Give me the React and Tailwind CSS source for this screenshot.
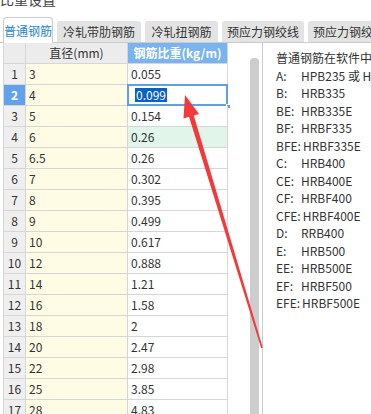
import React from "react";

const rows = [
  ["3", "0.055"],
  ["4", "0.099"],
  ["5", "0.154"],
  ["6", "0.26"],
  ["6.5", "0.26"],
  ["7", "0.302"],
  ["8", "0.395"],
  ["9", "0.499"],
  ["10", "0.617"],
  ["12", "0.888"],
  ["14", "1.21"],
  ["16", "1.58"],
  ["18", "2"],
  ["20", "2.47"],
  ["22", "2.98"],
  ["25", "3.85"],
  ["28", "4.83"],
];

const grades = [
  ["A:", "HPB235 或 HPB300"],
  ["B:", "HRB335"],
  ["BE:", "HRB335E"],
  ["BF:", "HRBF335"],
  ["BFE:", "HRBF335E"],
  ["C:", "HRB400"],
  ["CE:", "HRB400E"],
  ["CF:", "HRBF400"],
  ["CFE:", "HRBF400E"],
  ["D:", "RRB400"],
  ["E:", "HRB500"],
  ["EE:", "HRB500E"],
  ["EF:", "HRBF500"],
  ["EFE:", "HRBF500E"],
];

const tabs = [
  ["冷轧带肋钢筋", "w-[84px]"],
  ["冷轧扭钢筋", "w-[73px]"],
  ["预应力钢绞线", "w-[82px]"],
  ["预应力钢绞线", "w-[82px]"],
];

function Row({ n, d, w }) {
  const selected = n === 2;
  const green = n === 4;
  return (
    <div className="grid grid-cols-[22px_102px_100px] h-[21px]">
      <div
        className={
          selected
            ? "bg-[#62a2ec] text-white font-bold flex items-center justify-center border-r border-b border-[#d6d6d6]"
            : "bg-[#efefef] flex items-center justify-center border-r border-b border-[#d6d6d6]"
        }
      >
        {n}
      </div>
      <div className="bg-[#fffce6] flex items-center pl-[3px] border-r border-b border-[#d6d6d6]">
        {d}
      </div>
      <div
        className={
          green
            ? "bg-[#e1f5ea] flex items-center pl-[3px] border-r border-b border-[#d6d6d6]"
            : "bg-white flex items-center pl-[3px] border-r border-b border-[#d6d6d6] relative"
        }
      >
        {selected ? (
          <>
            <span className="ml-[4px] bg-[#0a60c9] text-white leading-[14px] px-px">{w}</span>
            <div className="absolute left-[-1px] top-[-1px] right-[-1px] bottom-[-1px] border-2 border-[#5f9fe6]" />
            <div className="absolute right-[-4px] bottom-[-4px] w-[5px] h-[5px] bg-[#5f9fe6] border border-white" />
          </>
        ) : (
          w
        )}
      </div>
    </div>
  );
}

export default function App() {
  return (
    <div className="relative w-[371px] h-[414px] overflow-hidden bg-white text-[12px] text-[#333] font-['Noto_Sans_CJK_SC','Noto_Sans',sans-serif]">
      <div className="h-[17px] overflow-hidden">
        <div className="-mt-[9px] text-[14px] leading-[16px] text-[#444]">比重设置</div>
      </div>

      <div className="h-[26px] flex items-end gap-[4px] pl-[3px] border-b border-[#cbcbcb] whitespace-nowrap">
        <div className="w-[60px] h-[26px] -mb-px bg-white border border-b-0 border-[#cbcbcb] rounded-t-[4px] flex items-center justify-center text-[#1f7fd8]">
          普通钢筋
        </div>
        {tabs.map(([t, w], i) => (
          <div
            key={i}
            className={`${w} shrink-0 h-[21px] bg-[#e3e3e3] rounded-t-[3px] flex items-center justify-center`}
          >
            {t}
          </div>
        ))}
      </div>

      <div className="flex h-[371px]">
        <div className="w-[262px] flex shrink-0">
          <div className="ml-[3px] w-[224px] border-l border-[#d6d6d6] leading-[16px]">
            <div className="grid grid-cols-[22px_102px_100px] h-[21px]">
              <div className="bg-[#ececec] border-r border-b border-[#d6d6d6]" />
              <div className="bg-[#ececec] border-r border-b border-[#d6d6d6] flex items-center justify-center">
                直径(mm)
              </div>
              <div className="bg-[#7ab3f2] border-r border-b border-[#d6d6d6] flex items-center justify-center text-white font-bold">
                钢筋比重(kg/m)
              </div>
            </div>
            {rows.map(([d, w], i) => (
              <Row key={i} n={i + 1} d={d} w={w} />
            ))}
          </div>
          <div className="ml-auto mr-[3px] mt-[15px] w-[9px] bg-[#cdcdcd] rounded-t-[4px]" />
        </div>

        <div className="flex-1 border-l border-[#cbcbcb] pl-[13px] pt-[6px] leading-[17.5px] whitespace-nowrap overflow-hidden">
          <div>普通钢筋在软件中的代号</div>
          {grades.map(([k, v]) => (
            <div key={k} className="flex">
              <span className="min-w-[23px] mr-[2px]">{k}</span>
              <span>{v}</span>
            </div>
          ))}
        </div>
      </div>

      <svg className="absolute inset-0 pointer-events-none" width="371" height="414" viewBox="0 0 371 414">
        <polygon
          points="185,95 199,114 193.8,115.4 262.8,347.8 261.2,348.2 189,116.8 183.5,118.5"
          fill="#f23a3a"
        />
      </svg>
    </div>
  );
}
